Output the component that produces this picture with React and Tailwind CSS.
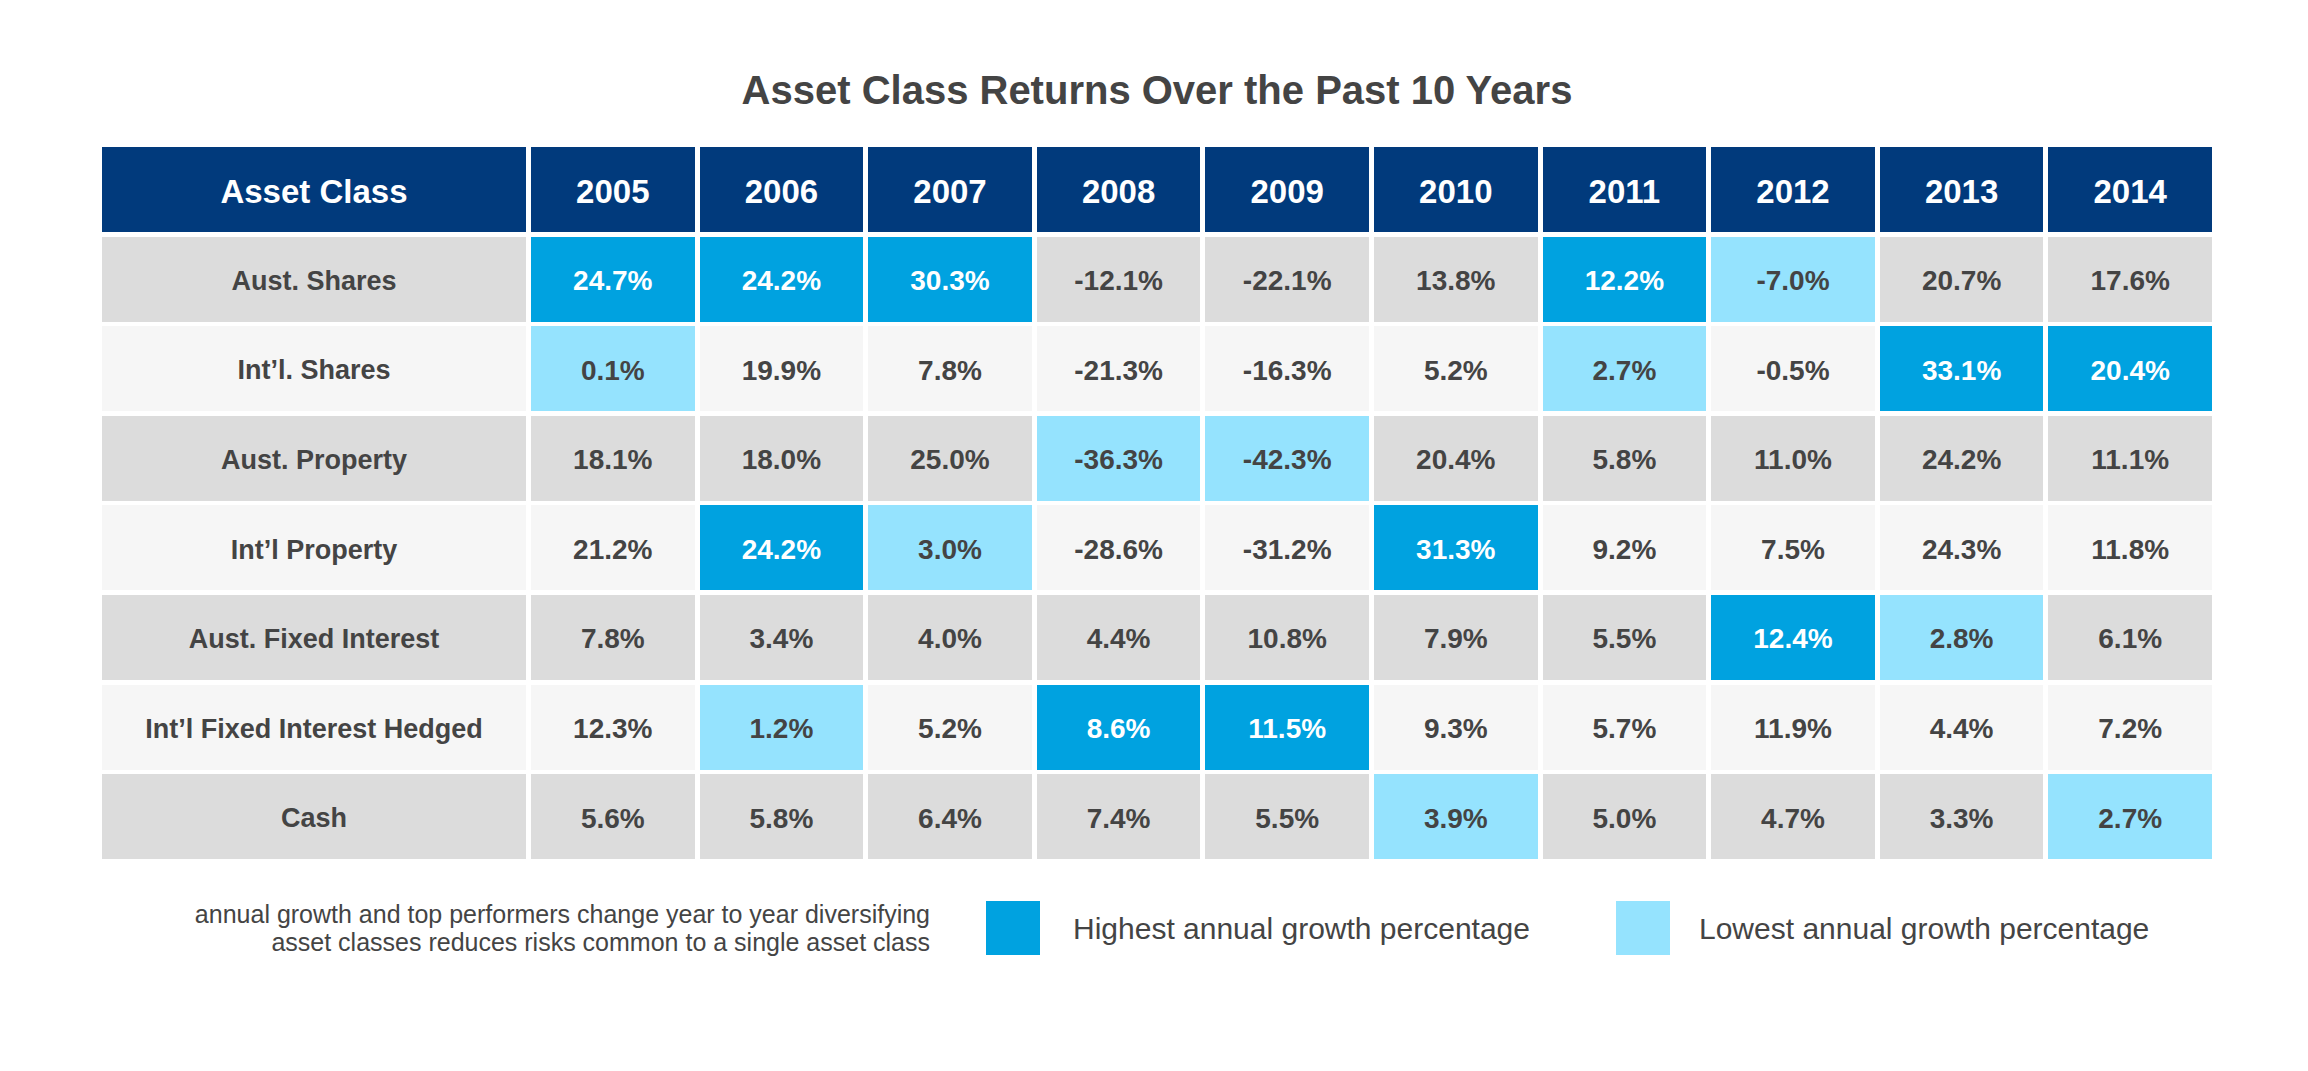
const YEARS = ["2005", "2006", "2007", "2008", "2009", "2010", "2011", "2012", "2013", "2014"];

// H = highest annual growth, L = lowest annual growth
const ROWS = [
  { name: "Aust. Shares", values: ["24.7%H", "24.2%H", "30.3%H", "-12.1%", "-22.1%", "13.8%", "12.2%H", "-7.0%L", "20.7%", "17.6%"] },
  { name: "Int’l. Shares", values: ["0.1%L", "19.9%", "7.8%", "-21.3%", "-16.3%", "5.2%", "2.7%L", "-0.5%", "33.1%H", "20.4%H"] },
  { name: "Aust. Property", values: ["18.1%", "18.0%", "25.0%", "-36.3%L", "-42.3%L", "20.4%", "5.8%", "11.0%", "24.2%", "11.1%"] },
  { name: "Int’l Property", values: ["21.2%", "24.2%H", "3.0%L", "-28.6%", "-31.2%", "31.3%H", "9.2%", "7.5%", "24.3%", "11.8%"] },
  { name: "Aust. Fixed Interest", values: ["7.8%", "3.4%", "4.0%", "4.4%", "10.8%", "7.9%", "5.5%", "12.4%H", "2.8%L", "6.1%"] },
  { name: "Int’l Fixed Interest Hedged", values: ["12.3%", "1.2%L", "5.2%", "8.6%H", "11.5%H", "9.3%", "5.7%", "11.9%", "4.4%", "7.2%"] },
  { name: "Cash", values: ["5.6%", "5.8%", "6.4%", "7.4%", "5.5%", "3.9%L", "5.0%", "4.7%", "3.3%", "2.7%L"] },
];

function Cell({ raw, rowBg }) {
  const flag = raw.slice(-1);
  let text = raw;
  let cls = `${rowBg} text-[#444444]`;
  if (flag === "H") {
    text = raw.slice(0, -1);
    cls = "bg-[#00a2e0] text-white";
  } else if (flag === "L") {
    text = raw.slice(0, -1);
    cls = "bg-[#95e3fe] text-[#444444]";
  }
  return <div className={`flex items-center justify-center pt-[4px] text-[28px] font-bold ${cls}`}>{text}</div>;
}

export default function App() {
  return (
    <div className="min-h-[1071px] w-[2308px] bg-white pt-[68px] font-['Liberation_Sans',Arial,sans-serif]">
      <div className="ml-[102px] w-[2110px]">
        <h1 className="text-center text-[40px] font-bold leading-[44px] text-[#444444]">Asset Class Returns Over the Past 10 Years</h1>

        <div className="mt-[35px] grid grid-cols-[424px_repeat(10,1fr)] grid-rows-[repeat(8,85px)] gap-x-[5px] gap-y-[4.6px]">
          <div className="flex items-center justify-center bg-[#013a7c] pt-[5px] text-[33px] font-bold text-white">Asset Class</div>
          {YEARS.map((y) => (
            <div key={y} className="flex items-center justify-center bg-[#013a7c] pt-[5px] text-[33px] font-bold text-white">
              {y}
            </div>
          ))}
          {ROWS.map((row, i) => {
            const rowBg = i % 2 === 0 ? "bg-[#dcdcdc]" : "bg-[#f6f6f6]";
            return [
              <div key={row.name} className={`flex items-center justify-center pt-[4px] text-[27px] font-bold text-[#444444] ${rowBg}`}>
                {row.name}
              </div>,
              ...row.values.map((v, j) => <Cell key={row.name + j} raw={v} rowBg={rowBg} />),
            ];
          })}
        </div>

        <div className="mt-[41px] flex items-center">
          <div className="w-[828px] text-right text-[25px] leading-[28px] text-[#444444]">
            <div>annual growth and top performers change year to year diversifying</div>
            <div>asset classes reduces risks common to a single asset class</div>
          </div>
          <div className="ml-[56px] h-[54px] w-[54px] bg-[#00a2e0]" />
          <div className="ml-[33px] w-[543px] text-[30px] text-[#444444]">Highest annual growth percentage</div>
          <div className="h-[54px] w-[54px] bg-[#95e3fe]" />
          <div className="ml-[29px] text-[30px] text-[#444444]">Lowest annual growth percentage</div>
        </div>
      </div>
    </div>
  );
}
